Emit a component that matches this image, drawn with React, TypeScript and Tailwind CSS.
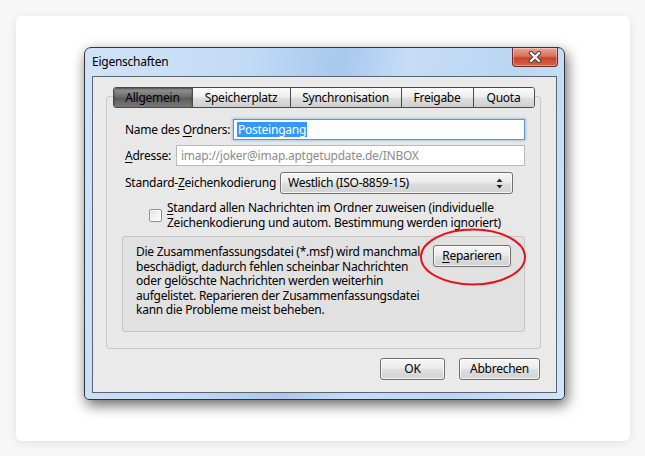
import type { ReactNode } from 'react';

const btnBg =
  'bg-[linear-gradient(#f6f6f6_0%,#ececec_45%,#dddddd_55%,#d2d2d2_100%)] shadow-[inset_0_0_0_1px_rgba(255,255,255,0.75)]';

function Button({ children, className = '' }: { children: ReactNode; className?: string }) {
  return (
    <div
      className={`h-[22px] shrink-0 flex items-center justify-center rounded-[3px] border border-[#707070] text-black ${btnBg} ${className}`}
    >
      {children}
    </div>
  );
}

function Key({ children }: { children: ReactNode }) {
  return <span className="underline underline-offset-[2px] decoration-1">{children}</span>;
}

function Tabs() {
  const tabs = [
    { label: 'Allgemein', w: 'w-[79px]' },
    { label: 'Speicherplatz', w: 'w-[98px]' },
    { label: 'Synchronisation', w: 'w-[111px]' },
    { label: 'Freigabe', w: 'w-[72px]' },
    { label: 'Quota', w: 'flex-1' },
  ];
  return (
    <div className="flex justify-center -mt-[10px]">
      <div className="w-[422px] h-[21px] flex rounded-[3px] border border-[#4a4a4a] overflow-hidden">
        {tabs.map((t, i) => (
          <div
            key={t.label}
            className={`${t.w} flex items-center justify-center ${i < tabs.length - 1 ? 'border-r border-[#4a4a4a]' : ''} ${
              i === 0
                ? 'bg-[linear-gradient(#9a9a9a_0%,#6e6e6e_45%,#5c5c5c_55%,#7a7a7a_100%)] shadow-[inset_0_1px_2px_rgba(0,0,0,0.5)]'
                : 'bg-[linear-gradient(#fbfbfb_0%,#eeeeee_45%,#dedede_55%,#cfcfcf_100%)]'
            }`}
          >
            {t.label}
          </div>
        ))}
      </div>
    </div>
  );
}

function CloseButton() {
  return (
    <div className="w-[46px] h-[19px] -mr-[1px] rounded-b-[4px] border border-t-0 border-[#6d2a22] bg-[linear-gradient(#e8a394_0%,#d8735f_45%,#c7432c_55%,#d2654c_100%)] shadow-[inset_0_0_0_1px_rgba(255,255,255,0.35)] flex items-center justify-center">
      <svg width="14" height="12" viewBox="0 0 14 12">
        <path d="M3 2 L11 10 M11 2 L3 10" stroke="#4a3a38" strokeWidth="4.2" strokeLinecap="round" />
        <path d="M3 2 L11 10 M11 2 L3 10" stroke="#ffffff" strokeWidth="2.4" strokeLinecap="round" />
      </svg>
    </div>
  );
}

function Dialog() {
  return (
    <div className="w-[481px] h-[353px] flex flex-col px-[7px] pb-[6px] rounded-t-[7px] rounded-b-[5px] border border-[#30353b] bg-[linear-gradient(100deg,#cfe3f8_0%,#c2dbf5_30%,#a9c8ec_48%,#c5ddf6_60%,#bcd6f2_80%,#d2e5f8_100%)] shadow-[2px_5px_14px_rgba(0,0,0,0.6)]">
      {/* Title bar */}
      <div className="h-[28px] flex items-start justify-between">
        <span className="mt-[6px] leading-[16px] text-black">Eigenschaften</span>
        <CloseButton />
      </div>

      {/* Client area */}
      <div className="flex-1 flex flex-col border border-[#5b6470] bg-[#eaeaea]">
        <div className="mt-[19px] ml-[13px] mr-[15px] h-[253px] flex flex-col rounded-[3px] border border-[#c8c8c8] bg-[#e8e8e8]">
          <Tabs />

          <div className="px-[15px] flex flex-col whitespace-nowrap">
            <div className="mt-[11px] h-[21px] flex items-center">
              <span className="pl-[3px]">
                Name des <Key>O</Key>rdners:
              </span>
              <div className="ml-auto shrink-0 w-[292px] h-[21px] flex items-center border border-[#5f95c6] bg-white shadow-[0_0_2px_1px_rgba(120,180,230,0.6)] pl-[3px]">
                <span className="bg-[#3399ff] text-white leading-[15px] px-[1px]">Posteingang</span>
              </div>
            </div>

            <div className="mt-[5px] h-[21px] flex items-center">
              <span className="pl-[3px]">
                <Key>A</Key>dresse:
              </span>
              <div className="ml-auto shrink-0 w-[349px] h-[21px] flex items-center border border-[#b6babd] bg-white pl-[4px] text-[#8d8d8d]">
                imap://joker@imap.aptgetupdate.de/INBOX
              </div>
            </div>

            <div className="mt-[6px] h-[22px] flex items-center">
              <span className="pl-[3px]">
                Standard-<Key>Z</Key>eichenkodierung
              </span>
              <div
                className={`ml-auto mr-[12px] shrink-0 w-[233px] h-[22px] flex items-center justify-between rounded-[3px] border border-[#707070] pl-[7px] pr-[9px] ${btnBg}`}
              >
                <span>Westlich (ISO-8859-15)</span>
                <svg width="7" height="11" viewBox="0 0 7 11">
                  <path d="M3.5 0.5 L6.5 4 L0.5 4 Z" fill="#222" />
                  <path d="M0.5 7 L6.5 7 L3.5 10.5 Z" fill="#222" />
                </svg>
              </div>
            </div>

            <div className="mt-[6px] h-[30px] flex items-center pl-[27px]">
              <div className="w-[13px] h-[13px] shrink-0 rounded-[2px] border border-[#8e8f8f] bg-[linear-gradient(135deg,#dcdcdc_0%,#f4f4f4_60%,#ffffff_100%)] shadow-[inset_0_0_0_1px_rgba(255,255,255,0.8)]" />
              <span className="ml-[5px] leading-[15px]">
                <Key>S</Key>tandard allen Nachrichten im Ordner zuweisen (individuelle
                <br />
                Zeichenkodierung und autom. Bestimmung werden ignoriert)
              </span>
            </div>

            <div className="relative mt-[6px] h-[96px] flex justify-between rounded-[3px] border border-[#c6c6c6] bg-[#e1e1e1] pl-[13px] pr-[13px] pt-[8px]">
              <p className="leading-[14.5px]">
                Die Zusammenfassungsdatei (*.msf) wird manchmal
                <br />
                beschädigt, dadurch fehlen scheinbar Nachrichten
                <br />
                oder gelöschte Nachrichten werden weiterhin
                <br />
                aufgelistet. Reparieren der Zusammenfassungsdatei
                <br />
                kann die Probleme meist beheben.
              </p>
              <Button className="w-[78px]">
                <span>
                  <Key>R</Key>eparieren
                </span>
              </Button>
              {/* red annotation ring */}
              <svg
                className="absolute left-[296px] -top-[9px] pointer-events-none"
                width="108"
                height="58"
                viewBox="0 0 108 58"
              >
                <ellipse cx="54" cy="29" rx="52" ry="27.5" fill="none" stroke="#e3141b" strokeWidth="2" />
              </svg>
            </div>
          </div>
        </div>

        <div className="mt-[9px] pr-[16px] flex justify-end gap-[14px]">
          <Button className="w-[65px]">OK</Button>
          <Button className="w-[81px]">Abbrechen</Button>
        </div>
      </div>
    </div>
  );
}

export default function App() {
  return (
    <div className="w-[645px] h-[456px] bg-[#f7f7f7] pt-[16px] pl-[16px] pr-[15px] pb-[15px] font-['Noto_Sans',sans-serif] text-[12px] tracking-[-0.25px] text-black">
      <div className="h-full rounded-[6px] bg-white shadow-[0_2px_10px_rgba(0,0,0,0.09)] pl-[68px] pt-[31px]">
        <Dialog />
      </div>
    </div>
  );
}
